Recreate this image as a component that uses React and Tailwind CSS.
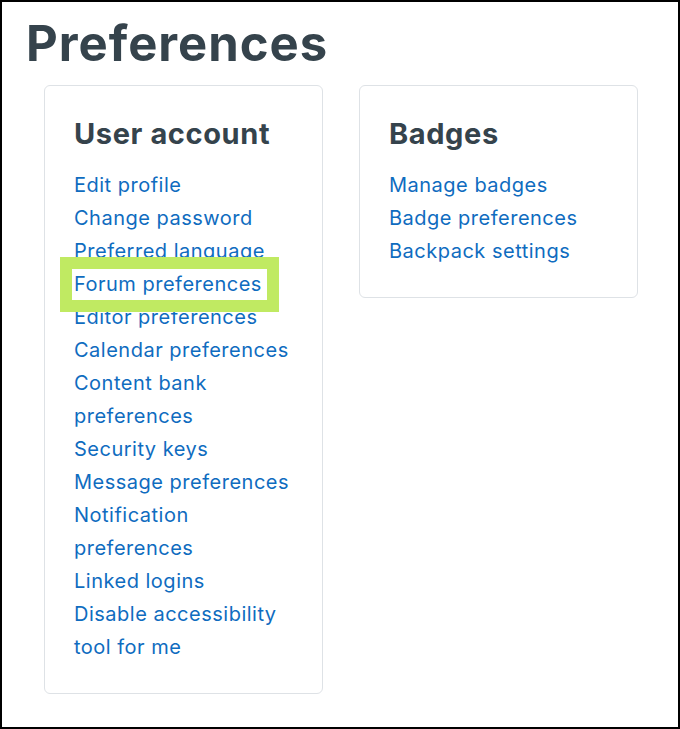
import React from "react"

const userLinks = [
  "Edit profile",
  "Change password",
  "Preferred language",
  "Forum preferences",
  "Editor preferences",
  "Calendar preferences",
  "Content bank preferences",
  "Security keys",
  "Message preferences",
  "Notification preferences",
  "Linked logins",
  "Disable accessibility tool for me",
]

const badgeLinks = ["Manage badges", "Badge preferences", "Backpack settings"]

const PrefCard = ({ title, links }) => (
  <div className="w-[279px] rounded-md border border-[#dee2e6] bg-white pb-[29px] pl-[29px] pr-[29px] pt-[33px]">
    <h3 className="text-[29px] font-bold leading-none tracking-[0.6px] text-[#35434c]">
      {title}
    </h3>
    <ul className="mt-[21px]">
      {links.map((link) => (
        <li key={link} className="text-[20px] leading-[33px] tracking-[0.5px]">
          <a href="#" className="text-[#0f6cbf]">
            {link}
          </a>
        </li>
      ))}
    </ul>
  </div>
)

export default function App() {
  return (
    <div
      className="relative h-[729px] w-[680px] border-2 border-black bg-white"
      style={{ fontFamily: "Inter, 'Noto Sans', sans-serif" }}
    >
      <h1 className="pl-[24px] pt-[17px] text-[49px] font-bold leading-none tracking-[1px] text-[#35434c]">
        Preferences
      </h1>
      <div className="mt-[17px] flex items-start gap-[36px] pl-[42px]">
        <PrefCard title="User account" links={userLinks} />
        <PrefCard title="Badges" links={badgeLinks} />
      </div>
      {/* highlight box over "Forum preferences" */}
      <div className="pointer-events-none absolute left-[58px] top-[255px] h-[55px] w-[219px] border-[12px] border-[#c0ea62]" />
    </div>
  )
}
